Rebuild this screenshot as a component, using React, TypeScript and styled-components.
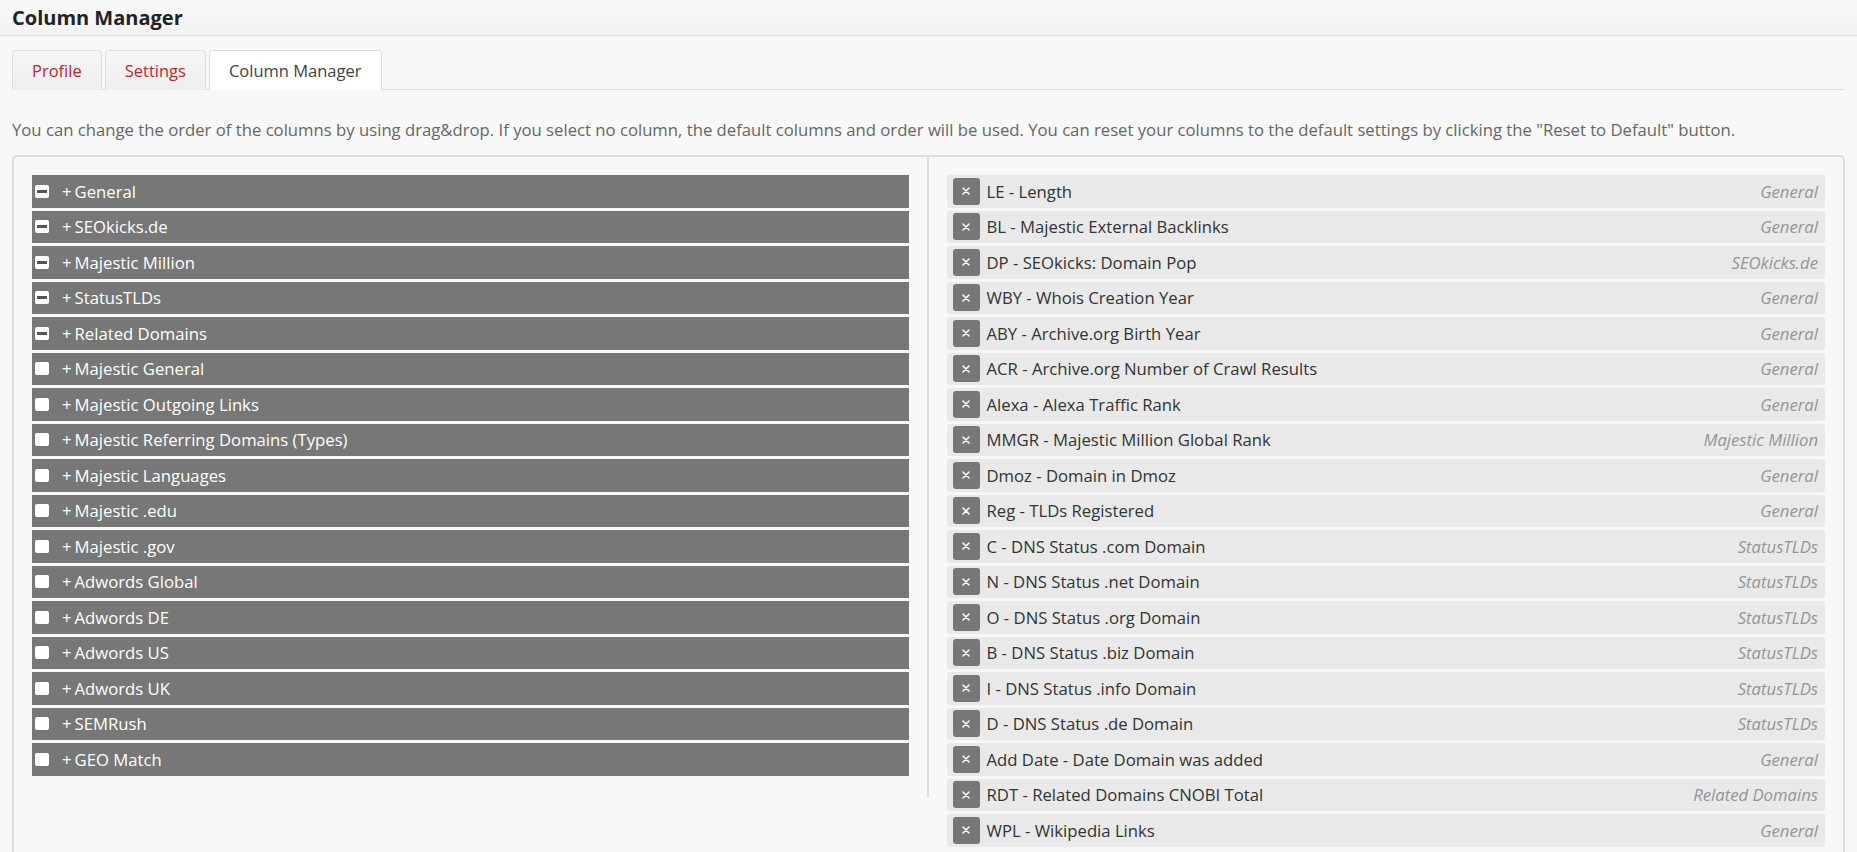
import React from "react";
import styled, { createGlobalStyle } from "styled-components";

const GlobalStyle = createGlobalStyle`
  html, body {
    margin: 0;
    padding: 0;
    background: #f8f8f8;
    font-family: "Open Sans", "Noto Sans", "Liberation Sans", sans-serif;
    color: #555;
  }
  * { box-sizing: border-box; }
`;

const Header = styled.header`
  height: 36px;
  padding: 0 12px;
  display: flex;
  align-items: center;
  border-bottom: 1px solid #e1e1e1;
  background: linear-gradient(#f9f9f9, #f2f2f2);
`;

const Title = styled.h1`
  margin: 0;
  font-size: 20px;
  font-weight: 700;
  color: #222;
`;

const Main = styled.main`
  padding: 0 12px;
`;

const TabBar = styled.nav`
  margin-top: 14px;
  display: flex;
  gap: 3px;
  border-bottom: 1px solid #dddddd;
`;

const Tab = styled.div<{ $active?: boolean }>`
  height: 40px;
  padding: 0 19px;
  display: flex;
  align-items: center;
  font-size: 16.5px;
  border: 1px solid #dddddd;
  border-bottom: none;
  border-radius: 4px 4px 0 0;
  margin-bottom: -1px;
  background: ${(p) => (p.$active ? "#ffffff" : "linear-gradient(#f6f6f6, #eeeeee)")};
  color: ${(p) => (p.$active ? "#444" : "#c0262c")};
`;

const Description = styled.p`
  margin: 28px 0 0;
  font-size: 16.7px;
  line-height: 24px;
  color: #666;
  white-space: nowrap;
`;

const Panel = styled.section`
  margin-top: 13px;
  border: 2px solid #dddddd;
  border-radius: 5px;
  display: grid;
  grid-template-columns: 1fr 1fr;
`;

const LeftCol = styled.div`
  align-self: start;
  border-right: 2px solid #dddddd;
  padding: 18px 18px 21px 18px;
  display: flex;
  flex-direction: column;
  gap: 3px;
`;

const RightCol = styled.div`
  padding: 18px 18px 20px 18px;
  display: flex;
  flex-direction: column;
  gap: 3px;
`;

const GroupRow = styled.div`
  height: 32.5px;
  background: #777777;
  display: flex;
  align-items: center;
  padding-left: 3px;
  color: #ffffff;
  font-size: 16.7px;
`;

const Plus = styled.span`
  margin-right: 3px;
`;

const Check = styled.span<{ $partial?: boolean }>`
  width: 14px;
  height: 13px;
  border-radius: 2px;
  background: #ffffff;
  margin-right: 13px;
  display: flex;
  align-items: center;
  justify-content: center;
  flex-shrink: 0;
  &::after {
    content: "";
    display: ${(p) => (p.$partial ? "block" : "none")};
    width: 10px;
    height: 3px;
    background: #555;
  }
`;

const ColRow = styled.div`
  height: 32.5px;
  background: #e9e9e9;
  border-radius: 3px;
  display: flex;
  align-items: center;
  padding: 0 7px 0 6px;
  font-size: 16.7px;
`;

const RemoveBtn = styled.span`
  width: 27px;
  height: 27px;
  border-radius: 3px;
  background: #777777;
  display: flex;
  align-items: center;
  justify-content: center;
  flex-shrink: 0;
  margin-right: 7px;
`;

const ColLabel = styled.span`
  color: #333;
`;

const Category = styled.span`
  margin-left: auto;
  font-style: italic;
  color: #959595;
`;

const groups: [string, boolean][] = [
  ["General", true],
  ["SEOkicks.de", true],
  ["Majestic Million", true],
  ["StatusTLDs", true],
  ["Related Domains", true],
  ["Majestic General", false],
  ["Majestic Outgoing Links", false],
  ["Majestic Referring Domains (Types)", false],
  ["Majestic Languages", false],
  ["Majestic .edu", false],
  ["Majestic .gov", false],
  ["Adwords Global", false],
  ["Adwords DE", false],
  ["Adwords US", false],
  ["Adwords UK", false],
  ["SEMRush", false],
  ["GEO Match", false],
];

const columns: [string, string][] = [
  ["LE - Length", "General"],
  ["BL - Majestic External Backlinks", "General"],
  ["DP - SEOkicks: Domain Pop", "SEOkicks.de"],
  ["WBY - Whois Creation Year", "General"],
  ["ABY - Archive.org Birth Year", "General"],
  ["ACR - Archive.org Number of Crawl Results", "General"],
  ["Alexa - Alexa Traffic Rank", "General"],
  ["MMGR - Majestic Million Global Rank", "Majestic Million"],
  ["Dmoz - Domain in Dmoz", "General"],
  ["Reg - TLDs Registered", "General"],
  ["C - DNS Status .com Domain", "StatusTLDs"],
  ["N - DNS Status .net Domain", "StatusTLDs"],
  ["O - DNS Status .org Domain", "StatusTLDs"],
  ["B - DNS Status .biz Domain", "StatusTLDs"],
  ["I - DNS Status .info Domain", "StatusTLDs"],
  ["D - DNS Status .de Domain", "StatusTLDs"],
  ["Add Date - Date Domain was added", "General"],
  ["RDT - Related Domains CNOBI Total", "Related Domains"],
  ["WPL - Wikipedia Links", "General"],
];

const XIcon = () => (
  <svg width="8" height="8" viewBox="0 0 8 8">
    <path d="M1 1 L7 7 M7 1 L1 7" stroke="#fff" strokeWidth="1.5" strokeLinecap="round" />
  </svg>
);

export default function App() {
  return (
    <>
      <GlobalStyle />
      <Header>
        <Title>Column Manager</Title>
      </Header>
      <Main>
        <TabBar>
          <Tab>Profile</Tab>
          <Tab>Settings</Tab>
          <Tab $active>Column Manager</Tab>
        </TabBar>
        <Description>
          You can change the order of the columns by using drag&amp;drop. If you select no column, the default
          columns and order will be used. You can reset your columns to the default settings by clicking the
          "Reset to Default" button.
        </Description>
        <Panel>
          <LeftCol>
            {groups.map(([name, partial]) => (
              <GroupRow key={name}>
                <Check $partial={partial} />
                <Plus>+</Plus>
                {name}
              </GroupRow>
            ))}
          </LeftCol>
          <RightCol>
            {columns.map(([label, cat]) => (
              <ColRow key={label}>
                <RemoveBtn>
                  <XIcon />
                </RemoveBtn>
                <ColLabel>{label}</ColLabel>
                <Category>{cat}</Category>
              </ColRow>
            ))}
          </RightCol>
        </Panel>
      </Main>
    </>
  );
}
